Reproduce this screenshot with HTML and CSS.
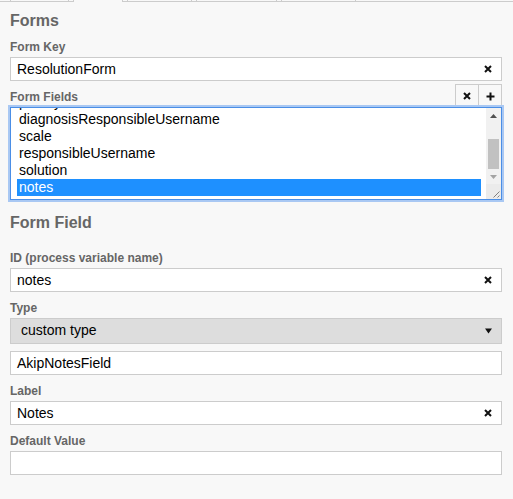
FILE: index.html
```html
<!DOCTYPE html>
<html>
<head>
<meta charset="utf-8">
<link rel="stylesheet" href="styles.css">
</head>
<body>
<div class="tabs">
  <div class="tab tab-1"></div>
  <div class="tab tab-2 active"></div>
  <div class="tab tab-3"></div>
  <div class="tab tab-4"></div>
  <div class="tab tab-5"></div>
</div>
<div class="panel">
  <h2 class="heading">Forms</h2>

  <div class="group">
    <div class="label">Form Key</div>
    <div class="input">
      <span class="value">ResolutionForm</span>
      <svg class="clear" width="8" height="8" viewBox="0 0 8 8"><path d="M1 1L7 7M7 1L1 7" stroke="#111" stroke-width="2" fill="none"/></svg>
    </div>
  </div>

  <div class="list-header">
    <div class="label label-inline">Form Fields</div>
    <div class="buttons">
      <div class="btn btn-remove"><svg width="8" height="8" viewBox="0 0 8 8"><path d="M1 1L7 7M7 1L1 7" stroke="#111" stroke-width="2" fill="none"/></svg></div>
      <div class="btn btn-add"><svg width="9" height="9" viewBox="0 0 9 9"><path d="M4.5 0.5V8.5M0.5 4.5H8.5" stroke="#111" stroke-width="2" fill="none"/></svg></div>
    </div>
  </div>

  <div class="listbox">
    <div class="list-view">
      <div class="list-items">
        <div class="item">priority</div>
        <div class="item">diagnosisResponsibleUsername</div>
        <div class="item">scale</div>
        <div class="item">responsibleUsername</div>
        <div class="item">solution</div>
        <div class="item selected">notes</div>
      </div>
    </div>
    <div class="scrollbar">
      <div class="sb-btn"><svg width="7" height="4" viewBox="0 0 7 4"><path d="M0 4L3.5 0L7 4Z" fill="#505050"/></svg></div>
      <div class="sb-track"><div class="sb-thumb"></div></div>
      <div class="sb-btn"><svg width="7" height="4" viewBox="0 0 7 4"><path d="M0 0L3.5 4L7 0Z" fill="#a3a3a3"/></svg></div>
      <div class="sb-corner"><svg width="15" height="15" viewBox="0 0 15 15"><path d="M13.5 7.5L7.5 13.5M13.5 11.5L11.5 13.5" stroke="#808080" stroke-width="1" fill="none"/></svg></div>
    </div>
  </div>

  <h2 class="heading heading-field">Form Field</h2>

  <div class="group">
    <div class="label">ID (process variable name)</div>
    <div class="input">
      <span class="value">notes</span>
      <svg class="clear" width="8" height="8" viewBox="0 0 8 8"><path d="M1 1L7 7M7 1L1 7" stroke="#111" stroke-width="2" fill="none"/></svg>
    </div>
  </div>

  <div class="group group-type">
    <div class="label">Type</div>
    <div class="select">
      <span class="value">custom type</span>
      <svg class="caret" width="7" height="6" viewBox="0 0 7 6"><path d="M0 0.5L3.5 5.5L7 0.5Z" fill="#111"/></svg>
    </div>
    <div class="input input-custom">
      <span class="value">AkipNotesField</span>
    </div>
  </div>

  <div class="group">
    <div class="label">Label</div>
    <div class="input">
      <span class="value">Notes</span>
      <svg class="clear" width="8" height="8" viewBox="0 0 8 8"><path d="M1 1L7 7M7 1L1 7" stroke="#111" stroke-width="2" fill="none"/></svg>
    </div>
  </div>

  <div class="group">
    <div class="label">Default Value</div>
    <div class="input">
      <span class="value"></span>
    </div>
  </div>
</div>
</body>
</html>
```

FILE: styles.css
```css
html, body {
  margin: 0;
  padding: 0;
  background: #f8f8f8;
  font-family: "Liberation Sans", Arial, sans-serif;
}

.tabs {
  display: flex;
  height: 2px;
  padding-left: 10px;
  gap: 4px;
  box-shadow: inset 0 -1px 0 #cccccc;
}

.tab {
  height: 2px;
  box-sizing: border-box;
  border-left: 1px solid #cccccc;
  border-right: 1px solid #cccccc;
}

.tab.active {
  background: #f8f8f8;
}

.tab-1 { width: 59px; }
.tab-2 { width: 50px; }
.tab-3 { width: 65px; }
.tab-4 { width: 81px; }
.tab-5 { width: 75px; }

.panel {
  padding: 9px 11px 0 10px;
}

.heading {
  margin: 0 0 9px 0;
  font-size: 16px;
  line-height: 20px;
  font-weight: bold;
  color: #666666;
}

.heading-field {
  margin-top: 13px;
  margin-bottom: 18px;
}

.group {
  margin-bottom: 9px;
}

.label {
  font-size: 12px;
  line-height: 14px;
  font-weight: bold;
  color: #666666;
  margin-bottom: 3px;
}

.input {
  display: flex;
  align-items: center;
  box-sizing: border-box;
  height: 24px;
  padding: 0 8px 0 6px;
  background: #ffffff;
  border: 1px solid #cccccc;
  font-size: 14px;
  line-height: 16px;
  color: #000000;
}

.input .value {
  flex: 1;
}

.clear {
  display: block;
  margin-right: 1px;
}

.select {
  display: flex;
  align-items: center;
  box-sizing: border-box;
  height: 26px;
  padding: 0 9px 2px 10px;
  background: #dddddd;
  border: 1px solid #cccccc;
  font-size: 14px;
  line-height: 16px;
  color: #000000;
}

.select .value {
  flex: 1;
}

.caret {
  display: block;
  margin-top: 2px;
}

.input-custom {
  margin-top: 7px;
}

.group:first-of-type {
  margin-bottom: 3px;
}

.list-header {
  display: flex;
  justify-content: space-between;
  align-items: flex-start;
  height: 24px;
  margin-bottom: -1px;
}

.label-inline {
  margin: 6px 0 0 0;
}

.buttons {
  display: flex;
}

.btn {
  box-sizing: border-box;
  height: 24px;
  display: flex;
  align-items: center;
  justify-content: center;
  border: 1px solid #cccccc;
  background: #f8f8f8;
}

.btn-remove {
  width: 24px;
}

.btn-add {
  width: 23px;
  border-left: none;
}

.listbox {
  position: relative;
  display: flex;
  box-sizing: border-box;
  height: 93px;
  background: #ffffff;
  border: 1px solid #4a8ee6;
  box-shadow: 0 0 0 2px #a9c8f3;
}

.list-view {
  flex: 1;
  overflow: hidden;
  padding: 0 5px 0 6px;
}

.list-items {
  margin-top: -14px;
}

.item {
  height: 17px;
  box-sizing: border-box;
  padding: 0 2px 1px 2px;
  font-size: 14px;
  line-height: 16px;
  color: #000000;
  white-space: nowrap;
}

.item.selected {
  background: #1e90ff;
  color: #ffffff;
}

.scrollbar {
  width: 15px;
  display: flex;
  flex-direction: column;
  background: #f1f1f1;
}

.sb-btn {
  height: 15px;
  display: flex;
  align-items: center;
  justify-content: center;
}

.sb-track {
  height: 46px;
}

.sb-thumb {
  margin: 16px 2px 0 2px;
  height: 30px;
  background: #c1c1c1;
}

.sb-corner {
  height: 15px;
  background: #ebebeb;
}

.sb-corner svg {
  display: block;
}
```
